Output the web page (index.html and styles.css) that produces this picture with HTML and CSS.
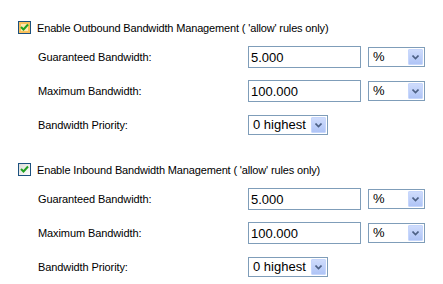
FILE: index.html
```html
<!doctype html>
<html lang="en">

<head>
    <meta charset="utf-8">
    <title>Bandwidth Management</title>
    <link rel="stylesheet" href="styles.css">
</head>

<body>
    <!-- outbound -->
    <div class="bw-section">
        <label class="bw-toggle">
            <span class="xp-check hover">
                <svg width="9" height="9" viewBox="0 0 9 9"><path d="M1 4 L3.5 6.5 L8 1.5" fill="none" stroke="#21a121" stroke-width="2"/></svg>
            </span>
            Enable Outbound Bandwidth Management ( 'allow' rules only)
        </label>
        <div class="bw-row">
            <span class="bw-label">Guaranteed Bandwidth:</span>
            <span class="xp-text">5.000</span>
            <span class="xp-select unit">%<span class="xp-arrow"><svg width="7" height="5" viewBox="0 0 7 5"><path d="M0.5 0.5 L3.5 3.5 L6.5 0.5" fill="none" stroke="#4d6185" stroke-width="1.6"/></svg></span></span>
        </div>
        <div class="bw-row">
            <span class="bw-label">Maximum Bandwidth:</span>
            <span class="xp-text">100.000</span>
            <span class="xp-select unit">%<span class="xp-arrow"><svg width="7" height="5" viewBox="0 0 7 5"><path d="M0.5 0.5 L3.5 3.5 L6.5 0.5" fill="none" stroke="#4d6185" stroke-width="1.6"/></svg></span></span>
        </div>
        <div class="bw-row">
            <span class="bw-label">Bandwidth Priority:</span>
            <span class="xp-select prio">0 highest<span class="xp-arrow"><svg width="7" height="5" viewBox="0 0 7 5"><path d="M0.5 0.5 L3.5 3.5 L6.5 0.5" fill="none" stroke="#4d6185" stroke-width="1.6"/></svg></span></span>
        </div>
    </div>

    <!-- inbound -->
    <div class="bw-section">
        <label class="bw-toggle">
            <span class="xp-check">
                <svg width="9" height="9" viewBox="0 0 9 9"><path d="M1 4 L3.5 6.5 L8 1.5" fill="none" stroke="#21a121" stroke-width="2"/></svg>
            </span>
            Enable Inbound Bandwidth Management ( 'allow' rules only)
        </label>
        <div class="bw-row">
            <span class="bw-label">Guaranteed Bandwidth:</span>
            <span class="xp-text">5.000</span>
            <span class="xp-select unit">%<span class="xp-arrow"><svg width="7" height="5" viewBox="0 0 7 5"><path d="M0.5 0.5 L3.5 3.5 L6.5 0.5" fill="none" stroke="#4d6185" stroke-width="1.6"/></svg></span></span>
        </div>
        <div class="bw-row">
            <span class="bw-label">Maximum Bandwidth:</span>
            <span class="xp-text">100.000</span>
            <span class="xp-select unit">%<span class="xp-arrow"><svg width="7" height="5" viewBox="0 0 7 5"><path d="M0.5 0.5 L3.5 3.5 L6.5 0.5" fill="none" stroke="#4d6185" stroke-width="1.6"/></svg></span></span>
        </div>
        <div class="bw-row">
            <span class="bw-label">Bandwidth Priority:</span>
            <span class="xp-select prio">0 highest<span class="xp-arrow"><svg width="7" height="5" viewBox="0 0 7 5"><path d="M0.5 0.5 L3.5 3.5 L6.5 0.5" fill="none" stroke="#4d6185" stroke-width="1.6"/></svg></span></span>
        </div>
    </div>
</body>

</html>
```

FILE: styles.css
```css
body{
   margin: 0;
   background: #fff;
   font-family: "Liberation Sans", Arial, sans-serif;
   font-size: 11px;
   color: #000;
}
.bw-section{
   padding-top: 14px;
}
.bw-toggle{
   display: flex;
   align-items: center;
   gap: 6px;
   height: 27px;
   padding-left: 18px;
   letter-spacing: -0.15px;
}
.xp-check{
   box-sizing: border-box;
   width: 13px;
   height: 13px;
   border: 1px solid #1c5180;
   background: linear-gradient(135deg, #dcdcd7, #fff);
   display: flex;
   align-items: center;
   justify-content: center;
}
.xp-check.hover{
   box-shadow: inset 0 0 0 2px #f9c05b;
   background: #fde9b0;
}
.bw-row{
   display: grid;
   grid-template-columns: 203px 113px 57px;
   column-gap: 7px;
   align-items: center;
   height: 34px;
   padding-left: 38px;
   letter-spacing: -0.1px;
}
.bw-section .bw-row:first-of-type{
   margin-top: -1px;
}
.xp-text{
   box-sizing: border-box;
   height: 22px;
   border: 1px solid #7f9db9;
   padding: 3px 2px 0;
   font-size: 13px;
   line-height: 16px;
   letter-spacing: 0;
}
.xp-select{
   box-sizing: border-box;
   height: 20px;
   border: 1px solid #7f9db9;
   padding: 1px 1px 1px 4px;
   font-size: 13px;
   line-height: 16px;
   letter-spacing: 0;
   display: flex;
   justify-content: space-between;
}
.xp-select.prio{
   width: 80px;
}
.xp-arrow{
   box-sizing: border-box;
   width: 15px;
   height: 16px;
   border: 1px solid #c6d6fc;
   border-radius: 1px;
   background: linear-gradient(#cfdcfc, #afc4f6);
   display: flex;
   align-items: center;
   justify-content: center;
}
```
